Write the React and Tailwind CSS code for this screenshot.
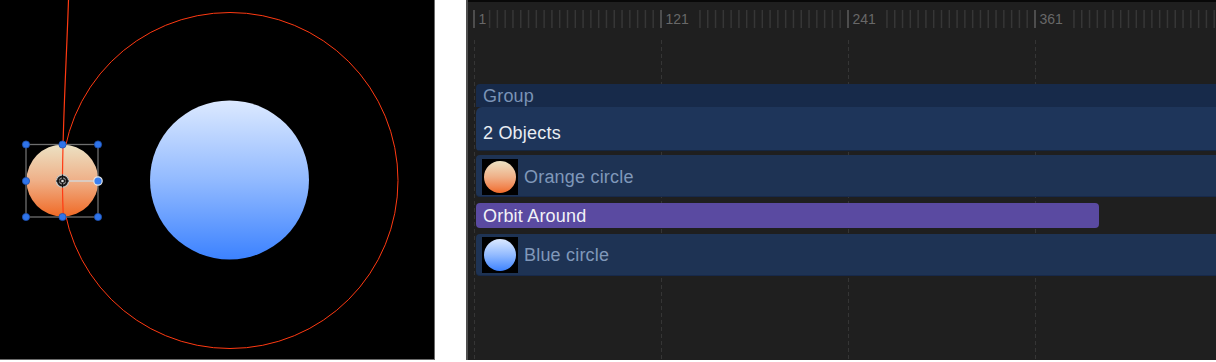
import React from "react";

function Canvas() {
  const handles = [
    [26, 144.5], [62.5, 144.5], [98, 144.5],
    [26, 181], [26, 217], [62.5, 217], [98, 217],
  ];
  return (
    <div className="w-[435px] h-[360px] bg-black border-r border-b border-[#6a6a6a] shrink-0">
      <svg width="434" height="359" viewBox="0 0 434 359" className="block">
        <defs>
          <linearGradient id="blueG" x1="0" y1="0" x2="0" y2="1">
            <stop offset="0" stopColor="#dce9ff" />
            <stop offset="0.5" stopColor="#92baff" />
            <stop offset="1" stopColor="#3c82ff" />
          </linearGradient>
          <linearGradient id="orangeG" x1="0" y1="0" x2="0" y2="1">
            <stop offset="0" stopColor="#ece2c4" />
            <stop offset="0.5" stopColor="#efb088" />
            <stop offset="1" stopColor="#f06a26" />
          </linearGradient>
        </defs>
        <circle cx="230" cy="180.5" r="168" fill="none" stroke="#ff3a12" strokeWidth="1" />
        <circle cx="229.5" cy="180" r="79.5" fill="url(#blueG)" />
        <circle cx="62.5" cy="180.5" r="36" fill="url(#orangeG)" />
        <path d="M68.5 0 C66.5 60 62.5 125 62.5 181 C62.5 200 63 210 63.5 218" fill="none" stroke="#ff3a12" strokeWidth="1.2" />
        <rect x="26" y="144.5" width="72" height="72.5" fill="none" stroke="#6e6e6e" strokeWidth="1.3" />
        <line x1="62.5" y1="181" x2="97" y2="181" stroke="#d4d4d4" strokeWidth="1.6" />
        {handles.map(([x, y], i) => (
          <circle key={i} cx={x} cy={y} r="3.6" fill="#2f74ea" stroke="#1d4fae" strokeWidth="0.8" />
        ))}
        <circle cx="98" cy="181" r="4.2" fill="#3a80f2" stroke="#e6e6e6" strokeWidth="1.2" />
        <circle cx="62.5" cy="181" r="6.2" fill="#1a1a1a" stroke="#c8c8c8" strokeWidth="1.3" />
        <circle cx="62.5" cy="181" r="3.2" fill="#2a2a2a" stroke="#9a9a9a" strokeWidth="1" />
        <line x1="56" y1="181" x2="69" y2="181" stroke="#111" strokeWidth="1" />
        <line x1="62.5" y1="174.5" x2="62.5" y2="187.5" stroke="#111" strokeWidth="1" />
        <circle cx="62.5" cy="181" r="1.3" fill="#ddd" />
      </svg>
    </div>
  );
}

function Ruler() {
  const step = 187 / 24;
  const ticks = [];
  const labels = [];
  for (let i = 0; 6 + i * step < 748; i++) {
    const x = 6 + i * step;
    const m = i % 24;
    const major = m === 0;
    const labelNum = 1 + Math.floor(i / 24) * 120;
    const hideMax = labelNum < 10 ? 1 : 4;
    if (!major && m <= hideMax) continue;
    ticks.push(
      <rect key={i} x={x - 0.75} y="8" width="1.5" height="18" fill={major ? "#5e5e5e" : "#363636"} />
    );
    if (major) {
      labels.push(
        <text key={"l" + i} x={x + 4.5} y="22" fill="#686868" fontSize="14" fontFamily="'Liberation Sans', Arial, sans-serif">
          {labelNum}
        </text>
      );
    }
  }
  return (
    <svg width="748" height="28" className="block">
      {ticks}
      {labels}
    </svg>
  );
}

function Grid() {
  const xs = [6, 193, 380, 567];
  return (
    <svg width="748" height="320" className="absolute left-0 top-[40px] pointer-events-none">
      {xs.map((x) => (
        <line key={x} x1={x + 0.5} y1="0" x2={x + 0.5} y2="320" stroke="#353535" strokeWidth="1" strokeDasharray="4 3" />
      ))}
    </svg>
  );
}

function Thumb({ kind }) {
  const grad =
    kind === "orange"
      ? "bg-linear-to-b from-[#ece2c4] via-[#efb088] to-[#f06a26]"
      : "bg-linear-to-b from-[#dce9ff] via-[#92baff] to-[#3c82ff]";
  return (
    <div className="w-[36px] h-[36px] bg-black flex items-center justify-center shrink-0">
      <div className={"w-[32px] h-[32px] rounded-full " + grad} />
    </div>
  );
}

function Timeline() {
  return (
    <div className="relative ml-[31px] w-[750px] h-[360px] bg-[#1f1f1f] border-l-2 border-[#4f4f4f] overflow-hidden shrink-0">
      <div className="h-[2px] bg-[#080808]" />
      <Ruler />
      <Grid />
      <div className="relative z-10 pt-[54px] pl-[8px] flex flex-col text-[18px] tracking-[0.2px] leading-none">
        <div className="flex flex-col rounded-l-[4px] overflow-hidden">
          <div className="h-[23px] bg-[#172a4a] flex items-center px-[7px] text-[#7b93b6]">Group</div>
          <div className="h-[44px] bg-[#1e355a] rounded-tl-[6px] flex items-center px-[7px] pt-[8px] text-[#e9edf3] border-b border-[#152640]">
            2 Objects
          </div>
        </div>
        <div className="mt-[4px] h-[42px] bg-[#1e3354] rounded-l-[4px] flex items-end pl-[6px] pb-[1px] border-b border-[#17294a]">
          <Thumb kind="orange" />
          <span className="ml-[6px] self-center pt-[3px] text-[#8098ba]">Orange circle</span>
        </div>
        <div className="mt-[6px] h-[25px] w-[623px] bg-[#5a4aa1] rounded-[4px] flex items-center px-[7px] text-[#f2f2f7]">
          Orbit Around
        </div>
        <div className="mt-[6px] h-[42px] bg-[#1e3354] rounded-l-[4px] flex items-center pl-[6px] border-b border-[#17294a]">
          <Thumb kind="blue" />
          <span className="ml-[6px] text-[#8098ba]">Blue circle</span>
        </div>
      </div>
    </div>
  );
}

export default function App() {
  return (
    <div className="w-[1216px] h-[362px] bg-white flex items-start font-['Liberation_Sans',Arial,sans-serif]">
      <Canvas />
      <Timeline />
    </div>
  );
}
